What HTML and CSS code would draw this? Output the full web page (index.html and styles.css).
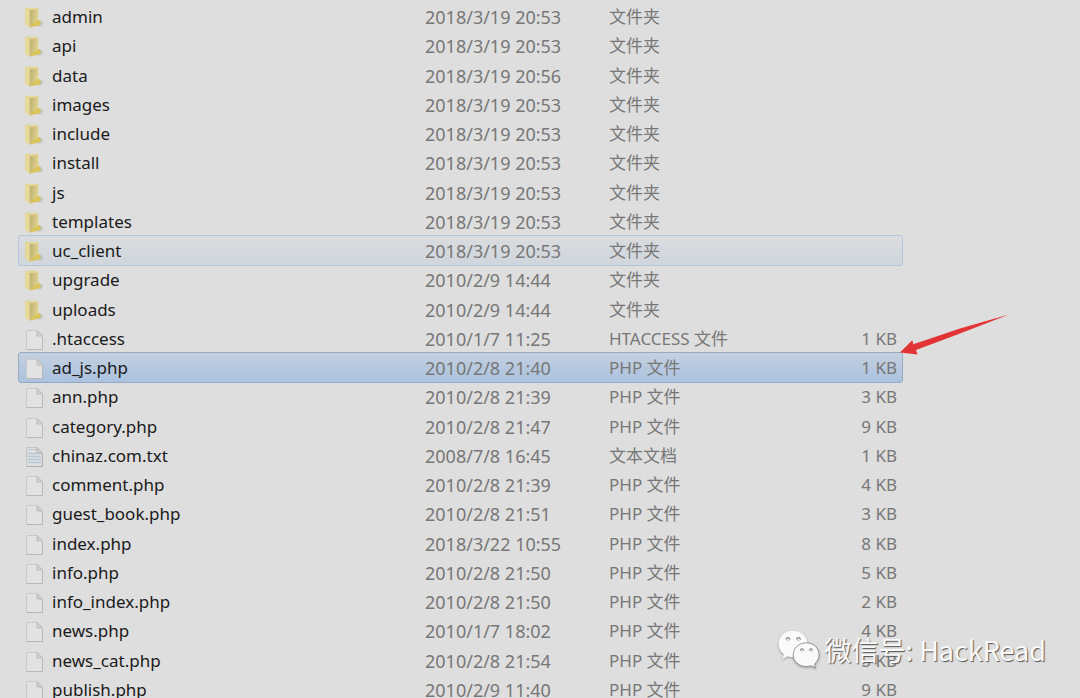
FILE: index.html
```html
<!DOCTYPE html>
<html lang="zh-CN">
<head>
    <meta charset="UTF-8">
    <meta name="viewport" content="width=device-width, initial-scale=1.0">
    <title>Files</title>
    <link rel="stylesheet" href="styles.css">
</head>
<body>
    <!-- Icon definitions -->
    <svg class="icon-defs" aria-hidden="true">
        <defs>
            <linearGradient id="folderFront" x1="0" y1="0" x2="1" y2="0">
                <stop offset="0" stop-color="#e0d596"/>
                <stop offset="0.5" stop-color="#e8dca0"/>
                <stop offset="1" stop-color="#d9ca80"/>
            </linearGradient>
            <linearGradient id="folderBack" x1="0" y1="0" x2="1" y2="0.3">
                <stop offset="0" stop-color="#b5a66b"/>
                <stop offset="0.4" stop-color="#c9ba7c"/>
                <stop offset="1" stop-color="#dccf8c"/>
            </linearGradient>
            <radialGradient id="folderShadow">
                <stop offset="0" stop-color="#777" stop-opacity="0.7"/>
                <stop offset="1" stop-color="#999" stop-opacity="0"/>
            </radialGradient>
        </defs>
        <symbol id="folder" viewBox="0 0 20 22">
            <ellipse cx="15" cy="16.500" rx="5" ry="4" fill="url(#folderShadow)"/>
            <path d="M2 .8H13Q14.500 .8 14.500 2.300V13L16.300 14V18.500L6 19.500L2 17Z" fill="#e0d596"/>
            <path d="M5.500 3.500L13.500 2.500V14L11 19.300L5.500 20.500Z" fill="url(#folderBack)"/>
            <path d="M10 15.500L14.500 13L16.300 14V18L11 19.300L6 20.500Z" fill="#d9c55c"/>
            <path d="M1 1L5 3Q6.200 3.800 6.200 5.500V20.800L1.800 18.300Q1 17.800 1 16.800Z" fill="url(#folderFront)"/>
        </symbol>
        <symbol id="file" viewBox="0 0 20 22">
            <path d="M2.500 1.500H13L18.500 7V20.500H2.500Z" fill="#e2e2e2" stroke="#cacaca"/>
            <path d="M13 1.500V7H18.500Z" fill="#d0d0d0" stroke="#bcbcbc"/>
            <path d="M3 20.500H18.500V8" fill="none" stroke="#b8b8b8"/>
        </symbol>
        <symbol id="text" viewBox="0 0 20 22">
            <path d="M2.500 1.500H13L18.500 7V20.500H2.500Z" fill="#dcdfe1" stroke="#c6c6c6"/>
            <path d="M4 3.500H12" stroke="#bababa" stroke-dasharray="2 1"/>
            <path d="M3.500 7.500H17M3.500 10.500H17M3.500 13.500H17M3.500 16.500H17" stroke="#b9c7d3" stroke-width="1.500"/>
            <path d="M13 1.500V7H18.500Z" fill="#d0d0d0" stroke="#b6b6b6"/>
            <path d="M3 20.500H18.500V8" fill="none" stroke="#adadad"/>
        </symbol>
    </svg>

    <main class="explorer">
        <table class="file-list">
            <colgroup>
                <col class="col-name">
                <col class="col-date">
                <col class="col-type">
                <col class="col-size">
            </colgroup>
            <tbody>
                <tr><td class="name"><svg class="icon"><use href="#folder"/></svg>admin</td><td class="date">2018/3/19 20:53</td><td>文件夹</td><td class="size"></td></tr>
                <tr><td class="name"><svg class="icon"><use href="#folder"/></svg>api</td><td class="date">2018/3/19 20:53</td><td>文件夹</td><td class="size"></td></tr>
                <tr><td class="name"><svg class="icon"><use href="#folder"/></svg>data</td><td class="date">2018/3/19 20:56</td><td>文件夹</td><td class="size"></td></tr>
                <tr><td class="name"><svg class="icon"><use href="#folder"/></svg>images</td><td class="date">2018/3/19 20:53</td><td>文件夹</td><td class="size"></td></tr>
                <tr><td class="name"><svg class="icon"><use href="#folder"/></svg>include</td><td class="date">2018/3/19 20:53</td><td>文件夹</td><td class="size"></td></tr>
                <tr><td class="name"><svg class="icon"><use href="#folder"/></svg>install</td><td class="date">2018/3/19 20:53</td><td>文件夹</td><td class="size"></td></tr>
                <tr><td class="name"><svg class="icon"><use href="#folder"/></svg>js</td><td class="date">2018/3/19 20:53</td><td>文件夹</td><td class="size"></td></tr>
                <tr><td class="name"><svg class="icon"><use href="#folder"/></svg>templates</td><td class="date">2018/3/19 20:53</td><td>文件夹</td><td class="size"></td></tr>
                <tr class="hovered"><td class="name"><svg class="icon"><use href="#folder"/></svg>uc_client</td><td class="date">2018/3/19 20:53</td><td>文件夹</td><td class="size"></td></tr>
                <tr><td class="name"><svg class="icon"><use href="#folder"/></svg>upgrade</td><td class="date">2010/2/9 14:44</td><td>文件夹</td><td class="size"></td></tr>
                <tr><td class="name"><svg class="icon"><use href="#folder"/></svg>uploads</td><td class="date">2010/2/9 14:44</td><td>文件夹</td><td class="size"></td></tr>
                <tr><td class="name"><svg class="icon"><use href="#file"/></svg>.htaccess</td><td class="date">2010/1/7 11:25</td><td>HTACCESS 文件</td><td class="size">1 KB</td></tr>
                <tr class="selected"><td class="name"><svg class="icon"><use href="#file"/></svg>ad_js.php</td><td class="date">2010/2/8 21:40</td><td>PHP 文件</td><td class="size">1 KB</td></tr>
                <tr><td class="name"><svg class="icon"><use href="#file"/></svg>ann.php</td><td class="date">2010/2/8 21:39</td><td>PHP 文件</td><td class="size">3 KB</td></tr>
                <tr><td class="name"><svg class="icon"><use href="#file"/></svg>category.php</td><td class="date">2010/2/8 21:47</td><td>PHP 文件</td><td class="size">9 KB</td></tr>
                <tr><td class="name"><svg class="icon"><use href="#text"/></svg>chinaz.com.txt</td><td class="date">2008/7/8 16:45</td><td>文本文档</td><td class="size">1 KB</td></tr>
                <tr><td class="name"><svg class="icon"><use href="#file"/></svg>comment.php</td><td class="date">2010/2/8 21:39</td><td>PHP 文件</td><td class="size">4 KB</td></tr>
                <tr><td class="name"><svg class="icon"><use href="#file"/></svg>guest_book.php</td><td class="date">2010/2/8 21:51</td><td>PHP 文件</td><td class="size">3 KB</td></tr>
                <tr><td class="name"><svg class="icon"><use href="#file"/></svg>index.php</td><td class="date">2018/3/22 10:55</td><td>PHP 文件</td><td class="size">8 KB</td></tr>
                <tr><td class="name"><svg class="icon"><use href="#file"/></svg>info.php</td><td class="date">2010/2/8 21:50</td><td>PHP 文件</td><td class="size">5 KB</td></tr>
                <tr><td class="name"><svg class="icon"><use href="#file"/></svg>info_index.php</td><td class="date">2010/2/8 21:50</td><td>PHP 文件</td><td class="size">2 KB</td></tr>
                <tr><td class="name"><svg class="icon"><use href="#file"/></svg>news.php</td><td class="date">2010/1/7 18:02</td><td>PHP 文件</td><td class="size">4 KB</td></tr>
                <tr><td class="name"><svg class="icon"><use href="#file"/></svg>news_cat.php</td><td class="date">2010/2/8 21:54</td><td>PHP 文件</td><td class="size">5 KB</td></tr>
                <tr><td class="name"><svg class="icon"><use href="#file"/></svg>publish.php</td><td class="date">2010/2/9 11:40</td><td>PHP 文件</td><td class="size">9 KB</td></tr>
            </tbody>
        </table>

        <!-- Arrow pointing at the selected file -->
        <svg class="arrow" viewBox="0 0 110 42" aria-hidden="true">
            <path d="M0 38.500L12.300 26.300L13.300 30.300L60 14.500L109 0.500L60 19.500L16 36L17.500 40.500Z" fill="#e23434"/>
        </svg>

        <div class="watermark">
            <svg class="wechat" viewBox="0 0 42 40" aria-hidden="true">
                <path d="M15 .8C6.800 .8.600 6.600.600 14C.600 18.200 2.600 21.800 6 24.200L4.200 29L9.800 26.300C12 27 14 27.200 16 27.100C21 27 29.500 23 29.500 14C29.500 6.600 23 .8 15 .8Z" fill="#fafafa"/>
                <path d="M28.300 12.800C20.800 12.800 15.200 18.200 15.200 24.700C15.200 31.400 21 36.500 28.300 36.500C30 36.500 31.500 36.200 33 35.700L37.600 38L36.300 34C39.300 31.800 41 28.600 41 24.700C41 18.200 35.600 12.800 28.300 12.800Z" fill="#fafafa" stroke="#8d8d8d" stroke-width=".9"/>
                <g fill="#dedede">
                    <circle cx="10" cy="9.500" r="2"/>
                    <circle cx="20.500" cy="9.500" r="2"/>
                    <circle cx="24" cy="20.500" r="1.700"/>
                    <circle cx="33" cy="20.500" r="1.700"/>
                </g>
                <path d="M8 9.500A2 2 0 0 1 12 9.500M18.500 9.500A2 2 0 0 1 22.500 9.500M22.300 20.500A1.700 1.700 0 0 1 25.700 20.500M31.300 20.500A1.700 1.700 0 0 1 34.700 20.500" fill="none" stroke="#777"/>
            </svg>
            <span>微信号: HackRead</span>
        </div>
    </main>
</body>
</html>
```
FILE: styles.css
```css
body {
    margin: 0;
    background: #dedede;
    color: #1a1a1a;
    font-family: "Noto Sans", "Noto Sans CJK SC", sans-serif;
    font-size: 17px;
}

.icon-defs {
    position: absolute;
    width: 0;
    height: 0;
}

.explorer {
    position: relative;
    box-sizing: border-box;
    height: 100vh;
    padding: 2px 178px 0 19px;
    overflow: hidden;
}

.file-list {
    width: 100%;
    table-layout: fixed;
    border-collapse: separate;
    border-spacing: 0;
}

.col-name {
    width: 406px;
}

.col-date {
    width: 184px;
}

.col-size {
    width: 100px;
}

.file-list tr {
    height: 29px;
}

.file-list tr:nth-child(4n + 2) {
    height: 30px;
}

.file-list td {
    padding: 0;
    color: #777;
    line-height: 28px;
    white-space: nowrap;
}

.file-list .name {
    padding-left: 5px;
    color: #1a1a1a;
}

.file-list .date {
    font-size: 18px;
}

.file-list .size {
    padding-right: 5px;
    text-align: right;
}

.icon {
    width: 20px;
    height: 22px;
    margin-right: 8px;
    vertical-align: middle;
}

.hovered,
.selected {
    border-radius: 2px;
}

.hovered {
    outline: 1px solid #b4c6dc;
}

.hovered td {
    background: linear-gradient(#dadcde, #d0d6dd);
}

.selected {
    outline: 1px solid #93a9c4;
}

.selected td {
    background: linear-gradient(#c4d0df, #abc2df);
}

.arrow {
    position: absolute;
    top: 314px;
    left: 900px;
    width: 110px;
    height: 42px;
}

.watermark {
    position: absolute;
    right: 34px;
    bottom: 28px;
    display: flex;
    align-items: center;
    gap: 5px;
    color: #fafafa;
    font-family: "Noto Sans CJK SC", sans-serif;
    font-size: 27px;
    line-height: 40px;
    text-shadow: 1px 1px 1px #555;
}

.wechat {
    width: 42px;
    height: 40px;
    filter: drop-shadow(0 1px 1px #999);
}
```
